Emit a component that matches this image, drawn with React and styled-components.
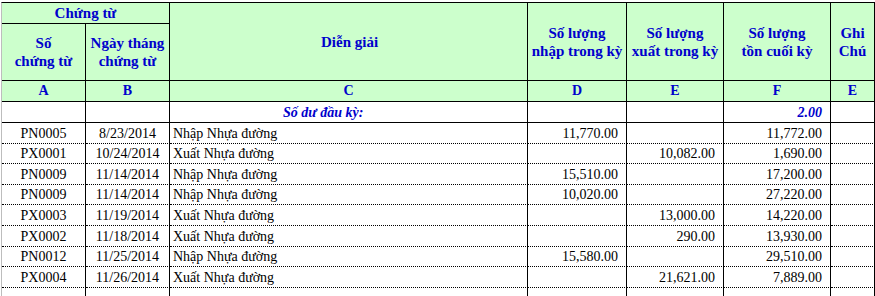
import React from "react";
import styled, { createGlobalStyle } from "styled-components";

const Global = createGlobalStyle`
  html, body { margin: 0; padding: 0; background: #fff; }
  body { font-family: "Liberation Serif", "DejaVu Serif", serif; }
`;

const Page = styled.div`
  padding: 2px 0 0 1px;
  width: 875px;
  height: 296px;
  box-sizing: border-box;
  overflow: hidden;
  font-family: "Liberation Serif", "DejaVu Serif", serif;
`;

const Sheet = styled.div`
  display: grid;
  grid-template-columns: 84px 84px 358px 99px 97px 107px 44px;
  grid-template-rows: 21px 57px 21px 21px repeat(9, 20.6px);
  border-left: 1px solid #bdbdbd;
  border-top: 1px solid #000;
  width: max-content;
  font-family: "Liberation Serif", "DejaVu Serif", serif;
`;

const Cell = styled.div`
  box-sizing: border-box;
  border-right: 1px solid #000;
  border-bottom: 1px ${(p) => (p.$dotted ? "dotted" : "solid")} #000;
  display: flex;
  align-items: flex-end;
  justify-content: ${(p) =>
    p.$align === "right" ? "flex-end" : p.$align === "center" ? "center" : "flex-start"};
  padding: 0 ${(p) => (p.$align === "right" ? "8px" : "3px")} 1px
    ${(p) => (p.$indent ? `${p.$indent}px` : "3px")};
  font-family: "Liberation Serif", "DejaVu Serif", serif;
  font-size: 14px;
  line-height: 17px;
  color: #000;
  white-space: nowrap;
  background: #fff;
`;

const HeadCell = styled.div`
  box-sizing: border-box;
  border-right: 1px solid #000;
  border-bottom: 1px solid #000;
  background: #ccffcc;
  color: #0000cc;
  font-family: "Liberation Serif", "DejaVu Serif", serif;
  font-weight: bold;
  font-size: 15px;
  line-height: 18px;
  text-align: center;
  display: flex;
  align-items: center;
  grid-column: ${(p) => (p.$colSpan ? `span ${p.$colSpan}` : "auto")};
  grid-row: ${(p) => (p.$rowSpan ? `span ${p.$rowSpan}` : "auto")};
  padding: ${(p) => (p.$left ? `0 0 0 ${p.$left}px` : "0")};
  justify-content: ${(p) => (p.$left ? "flex-start" : "center")};
`;

const LetterCell = styled(HeadCell)`
  font-size: 14px;
  align-items: flex-end;
  padding-bottom: 1px;
`;

const Emph = styled(Cell)`
  color: #0000cc;
  font-weight: bold;
  font-style: italic;
`;

const rows = [
  ["PN0005", "8/23/2014", "Nhập Nhựa đường", "11,770.00", "", "11,772.00"],
  ["PX0001", "10/24/2014", "Xuất Nhựa đường", "", "10,082.00", "1,690.00"],
  ["PN0009", "11/14/2014", "Nhập Nhựa đường", "15,510.00", "", "17,200.00"],
  ["PN0009", "11/14/2014", "Nhập Nhựa đường", "10,020.00", "", "27,220.00"],
  ["PX0003", "11/19/2014", "Xuất Nhựa đường", "", "13,000.00", "14,220.00"],
  ["PX0002", "11/18/2014", "Xuất Nhựa đường", "", "290.00", "13,930.00"],
  ["PN0012", "11/25/2014", "Nhập Nhựa đường", "15,580.00", "", "29,510.00"],
  ["PX0004", "11/26/2014", "Xuất Nhựa đường", "", "21,621.00", "7,889.00"],
  ["", "", "", "", "", ""],
];

export default function App() {
  return (
    <>
      <Global />
      <Page>
        <Sheet>
          <HeadCell $colSpan={2}>Chứng từ</HeadCell>
          <HeadCell $rowSpan={2} $left={151}>Diễn giải</HeadCell>
          <HeadCell $rowSpan={2}>
            Số lượng
            <br />
            nhập trong kỳ
          </HeadCell>
          <HeadCell $rowSpan={2}>
            Số lượng
            <br />
            xuất trong kỳ
          </HeadCell>
          <HeadCell $rowSpan={2}>
            Số lượng
            <br />
            tồn cuối kỳ
          </HeadCell>
          <HeadCell $rowSpan={2}>
            Ghi
            <br />
            Chú
          </HeadCell>
          <HeadCell>
            Số
            <br />
            chứng từ
          </HeadCell>
          <HeadCell>
            Ngày tháng
            <br />
            chứng từ
          </HeadCell>

          {["A", "B", "C", "D", "E", "F", "E"].map((l, i) => (
            <LetterCell key={i}>{l}</LetterCell>
          ))}

          <Cell />
          <Cell />
          <Emph $indent={113}>Số dư đầu kỳ:</Emph>
          <Cell />
          <Cell />
          <Emph $align="right">2.00</Emph>
          <Cell />

          {rows.map((r, i) => (
            <React.Fragment key={i}>
              <Cell $dotted $align="center">{r[0]}</Cell>
              <Cell $dotted $align="center">{r[1]}</Cell>
              <Cell $dotted>{r[2]}</Cell>
              <Cell $dotted $align="right">{r[3]}</Cell>
              <Cell $dotted $align="right">{r[4]}</Cell>
              <Cell $dotted $align="right">{r[5]}</Cell>
              <Cell $dotted />
            </React.Fragment>
          ))}
        </Sheet>
      </Page>
    </>
  );
}
